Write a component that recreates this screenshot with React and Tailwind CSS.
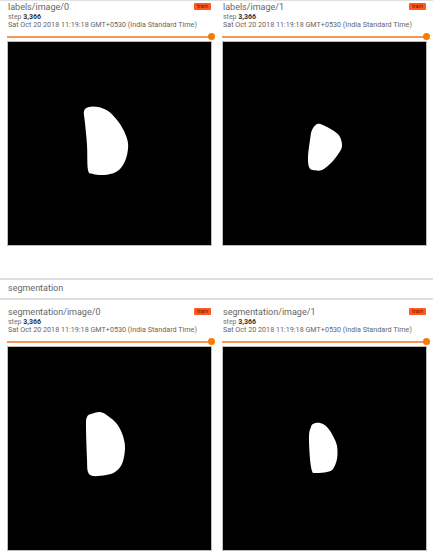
import React from "react";

function closedPath(p) {
  const n = p.length;
  let d = `M${p[0][0]},${p[0][1]}`;
  for (let i = 0; i < n; i++) {
    const p0 = p[(i - 1 + n) % n];
    const p1 = p[i];
    const p2 = p[(i + 1) % n];
    const p3 = p[(i + 2) % n];
    const c1x = p1[0] + (p2[0] - p0[0]) / 6;
    const c1y = p1[1] + (p2[1] - p0[1]) / 6;
    const c2x = p2[0] - (p3[0] - p1[0]) / 6;
    const c2y = p2[1] - (p3[1] - p1[1]) / 6;
    d += ` C${c1x.toFixed(1)},${c1y.toFixed(1)} ${c2x.toFixed(1)},${c2y.toFixed(1)} ${p2[0]},${p2[1]}`;
  }
  return d + " Z";
}

const blobs = [
  [[77, 70], [82, 66], [91, 66], [101, 70], [110, 79], [117, 90], [121, 102], [120, 114], [116, 124], [109, 131], [97, 134], [86, 133], [81, 129], [80, 104], [78, 82]],
  [[95, 83], [101, 84], [112, 90], [118, 96], [120, 105], [117, 112], [109, 122], [100, 129], [91, 129], [87, 126], [86, 116], [88, 99], [90, 89]],
  [[84, 68], [93, 66], [101, 70], [110, 78], [116, 90], [118, 103], [115, 118], [108, 126], [99, 129], [86, 130], [81, 126], [80, 113], [79, 80], [80, 71]],
  [[91, 78], [98, 77], [105, 81], [111, 90], [115, 100], [115, 113], [111, 123], [105, 126], [93, 127], [90, 125], [88, 113], [87, 90], [89, 81]],
];

function Card({ title, blob }) {
  return (
    <div className="w-[205px] flex flex-col">
      <div className="flex justify-between items-start pt-[1px]">
        <div className="text-[9px] leading-[11px] text-[#666666] pl-[1px]">{title}</div>
        <span className="mt-[1px] mr-[1px] bg-[#ff5722] text-[5.5px] leading-[7px] px-[3px] rounded-[1px] text-[#6a1c00]">
          train
        </span>
      </div>
      <div className="text-[7px] leading-[8px] text-[#757575] pl-[1px]">
        step <span className="font-bold text-[#333333]">3,366</span>
      </div>
      <div className="text-[7.2px] leading-[8px] text-[#666666] whitespace-nowrap pl-[1px]">
        Sat Oct 20 2018 11:19:18 GMT+0530 (India Standard Time)
      </div>
      <div className="relative h-[12px]">
        <div className="absolute left-0 right-0 top-[7px] h-[2px] bg-[#f7965a]" />
        <div className="absolute right-[-3px] top-[4px] w-[7px] h-[7px] rounded-full bg-[#f57c00]" />
      </div>
      <div className="w-[205px] h-[205px] bg-black border border-[#bdbdbd]">
        <svg width="203" height="203" viewBox="1 1 203 203" className="block">
          <path d={closedPath(blob)} fill="#fff" />
        </svg>
      </div>
    </div>
  );
}

export default function App() {
  return (
    <div
      className="w-[433px] h-[558px] bg-white border-t border-[#e0e0e0] overflow-hidden"
      style={{ fontFamily: "Roboto, 'Liberation Sans', sans-serif" }}
    >
      <div className="flex gap-[10px] px-[7px]">
        <Card title="labels/image/0" blob={blobs[0]} />
        <Card title="labels/image/1" blob={blobs[1]} />
      </div>
      <div className="mt-[32px] border-y-2 border-[#e0e0e0] px-[8px] text-[9px] leading-[16px] pb-[2px] text-[#666666]">
        segmentation
      </div>
      <div className="mt-[6px] flex gap-[10px] px-[7px]">
        <Card title="segmentation/image/0" blob={blobs[2]} />
        <Card title="segmentation/image/1" blob={blobs[3]} />
      </div>
    </div>
  );
}
